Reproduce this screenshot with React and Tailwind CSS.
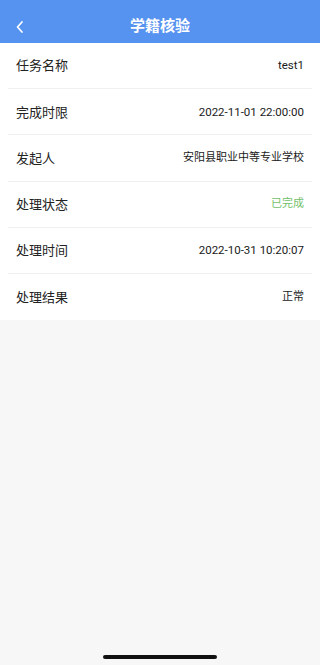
import React from 'react';

const rows = [
  { label: '任务名称', value: 'test1', latin: true },
  { label: '完成时限', value: '2022-11-01 22:00:00', latin: true },
  { label: '发起人', value: '安阳县职业中等专业学校' },
  { label: '处理状态', value: '已完成', green: true },
  { label: '处理时间', value: '2022-10-31 10:20:07', latin: true },
  { label: '处理结果', value: '正常' },
];

export default function App() {
  return (
    <div
      className="relative h-[665px] w-[320px] overflow-hidden bg-[#f7f7f7]"
      style={{ fontFamily: 'Roboto, "Noto Sans CJK SC", sans-serif' }}
    >
      {/* Header */}
      <header className="relative flex h-[43px] items-center justify-center bg-[#5692ef] pt-[9px]">
        <svg className="absolute left-[15px] top-[20px]" width="10" height="14" viewBox="0 0 10 14" fill="none">
          <path d="M7 2 L2.5 7 L7 12" stroke="white" strokeWidth="1.7" strokeLinecap="round" strokeLinejoin="round" />
        </svg>
        <h1 className="text-[15px] font-semibold text-white">学籍核验</h1>
      </header>

      {/* Detail list */}
      <div className="bg-white">
        {rows.map((r, i) => (
          <div key={r.label} className="px-2">
            <div
              className={`flex h-[46.2px] items-center justify-between px-2 pt-[1px] ${
                i < rows.length - 1 ? 'border-b border-[#f0f0f0]' : ''
              }`}
            >
              <span className="text-[13px] text-[#222]">{r.label}</span>
              <span
                className={`${r.latin ? 'text-[11.5px]' : 'text-[11px]'} ${
                  r.green ? 'text-[#72bf6c]' : 'text-[#1a1a1a]'
                }`}
              >
                {r.value}
              </span>
            </div>
          </div>
        ))}
      </div>

      {/* Home indicator */}
      <div className="absolute bottom-[6px] left-[103px] h-[4px] w-[114px] rounded-full bg-[#111]" />
    </div>
  );
}
